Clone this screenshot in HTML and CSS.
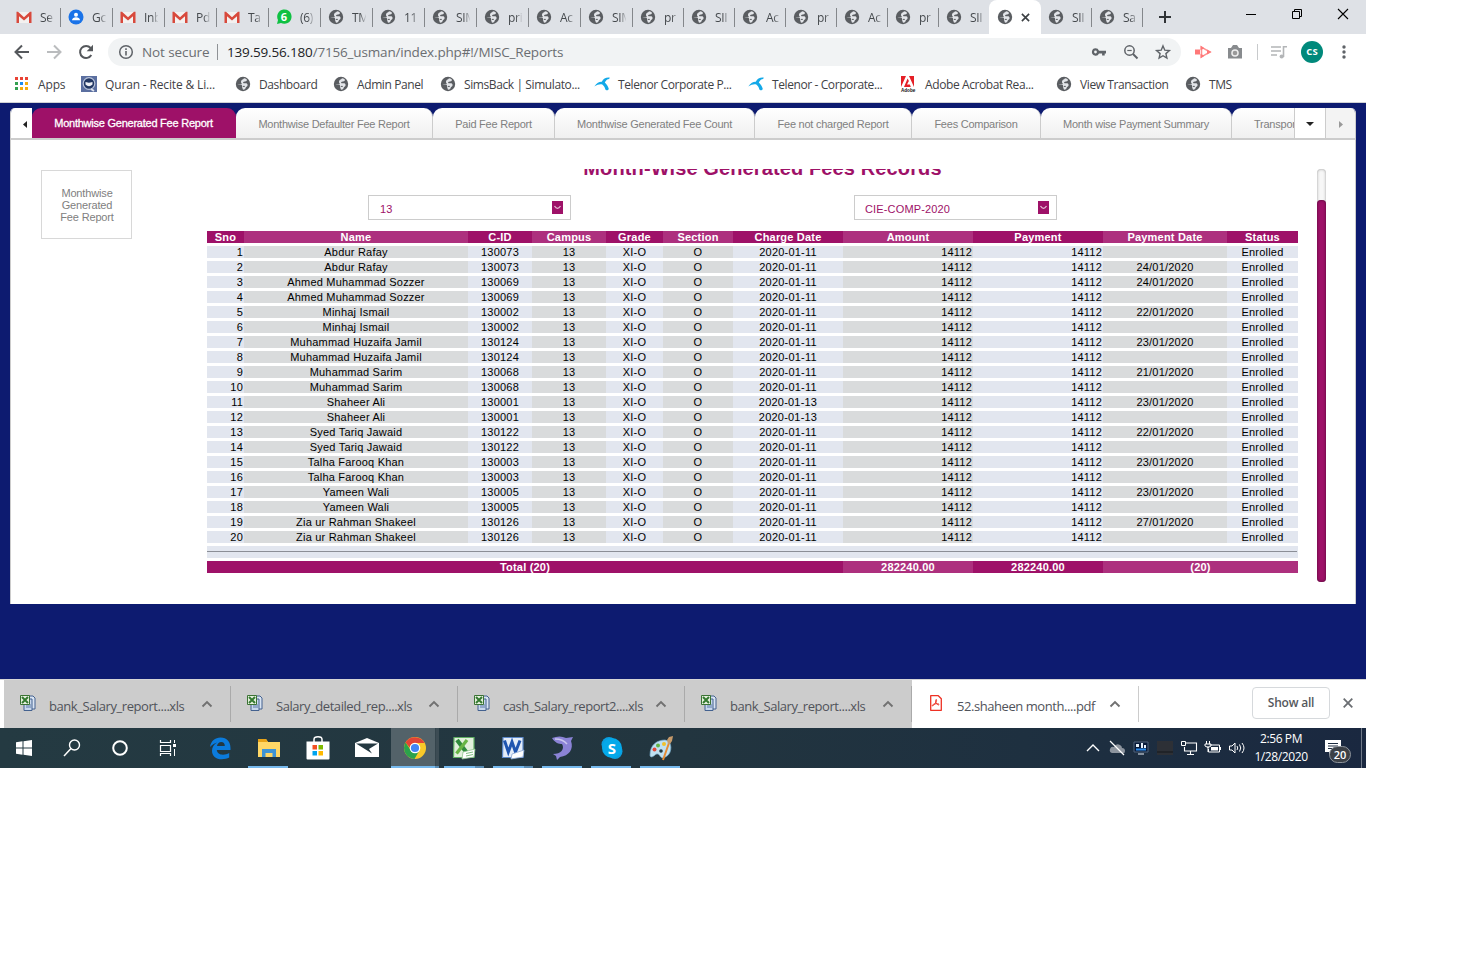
FILE: index.html
```html
<!DOCTYPE html>
<html lang="en">
<head>
<meta charset="utf-8">
<title>MISC Reports</title>
<link rel="stylesheet" href="styles.css">
</head>
<body>
<svg class="sprite" aria-hidden="true">
  <symbol id="globe" viewBox="0 0 16 16"><circle cx="8" cy="8" r="7.200" fill="#5a5d61"/><path d="M2.300 8.300l3.400.300c1.600.2 1.400 1.500 1.400 2.700l.9 2.500c2-.3 2.600-1.200 2.800-2.300.3-1 1.800-1 1.800-2.500 0-1.300-1-1.700-2.300-1.700H8.600c-.8-.4-.6-1.300.3-1.500 1.400-.2 3.300-.3 3-2C11.700 3 10.400 2.500 9 2.300c-.6 1.300-2 1.200-2.600 2.100-.7 1-.4 2.300.4 3.100z" fill="#e3e5e9"/><path d="M3.300 7.600h3.200M7.800 10.400h2" stroke="#5a5d61" stroke-width="1"/></symbol>
  <symbol id="gmail" viewBox="0 0 16 16"><path d="M1 3h14v11H1z" fill="#f3f1f0"/><path d="M.5 14V2.800h1.500L8 8.300l6-5.500h1.500V14H13V7.300l-5 4.200-5-4.200V14z" fill="#d8493c"/></symbol>
  <symbol id="xls" viewBox="0 0 16 16"><path d="M6 1h7l2 2v11H6z" fill="#d9e4f2" stroke="#43618f"/><path d="M4 4h8v11.500H4z" fill="#c7d7ec" stroke="#43618f"/><path d="M6 10h5M6 12h5" stroke="#5d7aa8"/><path d="M.5.5h9v9h-9z" fill="#e7f1df" stroke="#3b7334"/><path d="M2 2l6 6M8 2L2 8" stroke="#347a30" stroke-width="2"/></symbol>
  <symbol id="chev" viewBox="0 0 12 12"><path d="M1.500 8.500L6 4l4.500 4.500" fill="none" stroke="#717171" stroke-width="1.900"/></symbol>
  <symbol id="telenor" viewBox="0 0 16 16"><path d="M.3 10.500C3 6.500 5.500 5.500 7.800 5.700 9.500 2.200 12 1.200 15.700 1.500l-.5 1.500c-2 .2-3.400 1.500-4.400 3.500 2 1.700 3.400 4 4 6.500-.8 1.900-3 1.600-3.500.2-.5-2-1.600-3.600-3-4.700C6 8 3.500 8.500.3 10.500z" fill="#13a9e8"/></symbol>
</svg>
<div class="screen">
  <div class="tabstrip">
    <div class="tab"><svg><use href="#gmail"/></svg><span>Se</span></div>
    <div class="tab"><svg viewBox="0 0 16 16"><circle cx="8" cy="8" r="7.500" fill="#1a73e8"/><circle cx="8" cy="5.700" r="2" fill="#fff"/><path d="M4 11.300c0-4 8-4 8 0z" fill="#fff"/></svg><span>Gc</span></div>
    <div class="tab"><svg><use href="#gmail"/></svg><span>Inb</span></div>
    <div class="tab"><svg><use href="#gmail"/></svg><span>Pd</span></div>
    <div class="tab"><svg><use href="#gmail"/></svg><span>Ta</span></div>
    <div class="tab"><svg viewBox="0 0 16 16"><path d="M1 15l1-4a7.200 7.200 0 1 1 3 3z" fill="#0fc143"/><text x="8" y="12" class="wa">6</text></svg><span>(6)</span></div>
    <div class="tab"><svg><use href="#globe"/></svg><span>TM</span></div>
    <div class="tab"><svg><use href="#globe"/></svg><span>11</span></div>
    <div class="tab"><svg><use href="#globe"/></svg><span>SIM</span></div>
    <div class="tab"><svg><use href="#globe"/></svg><span>pri</span></div>
    <div class="tab"><svg><use href="#globe"/></svg><span>Ac</span></div>
    <div class="tab"><svg><use href="#globe"/></svg><span>SIM</span></div>
    <div class="tab narrow"><svg><use href="#globe"/></svg><span>pr</span></div>
    <div class="tab narrow"><svg><use href="#globe"/></svg><span>SII</span></div>
    <div class="tab narrow"><svg><use href="#globe"/></svg><span>Ac</span></div>
    <div class="tab narrow"><svg><use href="#globe"/></svg><span>pr</span></div>
    <div class="tab narrow"><svg><use href="#globe"/></svg><span>Ac</span></div>
    <div class="tab narrow"><svg><use href="#globe"/></svg><span>pr</span></div>
    <div class="tab narrow noline"><svg><use href="#globe"/></svg><span>SII</span></div>
    <div class="tab current"><svg><use href="#globe"/></svg><svg class="tabx" viewBox="0 0 10 10"><path d="M1 1l8 8M9 1L1 9" stroke="#3c4043" stroke-width="1.800"/></svg></div>
    <div class="tab narrow"><svg><use href="#globe"/></svg><span>SII</span></div>
    <div class="tab narrow"><svg><use href="#globe"/></svg><span>Sa</span></div>
    <svg class="plus" viewBox="0 0 12 12"><path d="M6 0v12M0 6h12" stroke="#303336" stroke-width="2"/></svg>
    <div class="winbtns">
      <svg viewBox="0 0 12 12"><path d="M1 6.500h10" stroke="#000"/></svg>
      <svg viewBox="0 0 12 12"><path d="M1.500 3.500h7v7h-7zM3.500 3.500v-2h7v7h-2" fill="none" stroke="#000"/></svg>
      <svg viewBox="0 0 12 12"><path d="M1 1l10 10M11 1L1 11" stroke="#000" stroke-width="1.100"/></svg>
    </div>
  </div>

  <div class="toolbar">
    <div class="nav">
      <svg viewBox="0 0 16 16"><path d="M15 8H2M8 1.500L1.500 8 8 14.500" fill="none" stroke="#55585c" stroke-width="2"/></svg>
      <svg viewBox="0 0 16 16"><path d="M1 8h13M8 1.500L14.500 8 8 14.500" fill="none" stroke="#babcbe" stroke-width="2"/></svg>
      <svg viewBox="0 0 16 16"><path d="M13.300 11A6 6 0 1 1 12.600 4" fill="none" stroke="#55585c" stroke-width="2"/><path d="M15 .8v6.400H8.700z" fill="#55585c"/></svg>
    </div>
    <div class="omnibox">
      <svg class="info" viewBox="0 0 16 16"><circle cx="8" cy="8" r="6.300" fill="none" stroke="#5f6368" stroke-width="1.500"/><path d="M8 7v4.500M8 4.300v1.600" stroke="#5f6368" stroke-width="1.600"/></svg>
      <span class="secure">Not secure</span><i></i>
      <span class="url"><b>139.59.56.180</b>/7156_usman/index.php#!/MISC_Reports</span>
      <div class="omni-icons">
        <svg viewBox="0 0 16 16"><path d="M4.500 4.300a3.700 3.700 0 0 1 3.500 2.400h7v2.800h-1.300v2h-2.600v-2H8a3.700 3.700 0 1 1-3.500-5.200z" fill="#5f6368"/><circle cx="4.500" cy="8" r="1.400" fill="#f1f3f4"/></svg>
        <svg viewBox="0 0 16 16"><circle cx="6.500" cy="6.500" r="4.700" fill="none" stroke="#5f6368" stroke-width="1.500"/><path d="M10 10l4.500 4.500" stroke="#5f6368" stroke-width="1.900"/><path d="M4.300 6.500h4.400" stroke="#5f6368" stroke-width="1.200"/></svg>
        <svg viewBox="0 0 16 16"><path d="M8 1.900l1.800 4.300 4.600.4-3.500 3 1 4.500L8 11.700l-3.900 2.400 1-4.500-3.500-3 4.600-.4z" fill="none" stroke="#5f6368" stroke-width="1.400"/></svg>
      </div>
    </div>
    <div class="exts">
      <svg viewBox="0 0 18 16"><path d="M1 5.500h5v5H1z" fill="#ff7878"/><path d="M7.500 3.200v9.600L16 8z" fill="#fff" stroke="#ff9090" stroke-width="1.500"/><path d="M6.500 1.500l4 2.700-4 2zM6.500 14.500l4-2.700-4-2zM13 5.500L17.500 8 13 10.500z" fill="#ff7878"/></svg>
      <svg viewBox="0 0 16 16"><path d="M1 4h3l2-3h4l2 3h3v10.500H1z" fill="#888b8e"/><circle cx="8" cy="9" r="3.800" fill="#eee"/><circle cx="8" cy="9" r="2.300" fill="#999"/></svg>
      <i></i>
      <svg viewBox="0 0 16 16"><path d="M0 3h10M0 7h10M0 11h6M12.500 13V2.800H16" fill="none" stroke="#b3b5b7" stroke-width="1.600"/><circle cx="10.700" cy="12.500" r="2.100" fill="#b3b5b7"/></svg>
      <div class="avatar">CS</div>
      <svg viewBox="0 0 16 16" fill="#5f6368"><circle cx="8" cy="3" r="1.700"/><circle cx="8" cy="8" r="1.700"/><circle cx="8" cy="13" r="1.700"/></svg>
    </div>
  </div>

  <div class="bookmarks">
    <div><svg viewBox="0 0 16 16"><path d="M1 1h3v3H1zM6 1h3v3H6zM11 1h3v3h-3z" fill="#e94335"/><path d="M1 6h3v3H1zM1 11h3v3H1z" fill="#34a050"/><path d="M6 6h3v3H6z" fill="#1a8cf0"/><path d="M11 6h3v3h-3zM11 11h3v3h-3zM6 11h3v3H6z" fill="#f5ac0c"/></svg><span>Apps</span></div>
    <div><svg viewBox="0 0 16 16"><path d="M0 0h16v16H0z" fill="#5b6fa0"/><circle cx="8" cy="7.500" r="5.800" fill="#223763" stroke="#b9c3d9" stroke-width="1.200"/><path d="M4.500 6l3.500.8 3.500-.8v2.500Q8 12 4.500 8.500z" fill="#eef0f5"/><path d="M10 13l3 2" stroke="#dfe4ef" stroke-width="1.800"/></svg><span>Quran - Recite &amp; Li...</span></div>
    <div><svg><use href="#globe"/></svg><span>Dashboard</span></div>
    <div><svg><use href="#globe"/></svg><span>Admin Panel</span></div>
    <div><svg><use href="#globe"/></svg><span>SimsBack | Simulato...</span></div>
    <div><svg><use href="#telenor"/></svg><span>Telenor Corporate P...</span></div>
    <div><svg><use href="#telenor"/></svg><span>Telenor - Corporate...</span></div>
    <div><svg viewBox="0 0 16 16"><path d="M0 0h13v11H0z" fill="#e51f26"/><path d="M0 11L5 0h3l5 11H9.800L8.900 8.600H6L7.900 5 6.600 2.500 3 11z" fill="#fff"/><text x="0" y="15.700" class="adobe">Adobe</text></svg><span>Adobe Acrobat Rea...</span></div>
    <div><svg><use href="#globe"/></svg><span>View Transaction</span></div>
    <div><svg><use href="#globe"/></svg><span>TMS</span></div>
  </div>

  <div class="page">
    <div class="panel">
      <div class="reports">
        <div class="prev"><svg viewBox="0 0 4 7"><path d="M4 0v7L0 3.500z" fill="#222"/></svg></div>
        <div class="rtab on">Monthwise Generated Fee Report</div>
        <div class="rtab">Monthwise Defaulter Fee Report</div>
        <div class="rtab">Paid Fee Report</div>
        <div class="rtab">Monthwise Generated Fee Count</div>
        <div class="rtab">Fee not charged Report</div>
        <div class="rtab">Fees Comparison</div>
        <div class="rtab">Month wise Payment Summary</div>
        <div class="rtab last">Transport</div>
        <div class="more"><svg viewBox="0 0 8 4"><path d="M0 0h8L4 4z" fill="#222"/></svg></div>
        <div class="next"><svg viewBox="0 0 4 7"><path d="M0 0v7l4-3.500z" fill="#999"/></svg></div>
      </div>
      <div class="body">
        <div class="side">Monthwise<br>Generated<br>Fee Report</div>
        <div class="report">
          <div class="heading"><span>Month-Wise Generated Fees Records</span></div>
          <div class="filters">
            <div class="select">13<svg viewBox="0 0 11 13"><path d="M2.500 5q1.500 2.300 3 2.300t3-2.300" fill="none" stroke="#e4bdd4" stroke-width="1.300"/></svg></div>
            <div class="select">CIE-COMP-2020<svg viewBox="0 0 11 13"><path d="M2.500 5q1.500 2.300 3 2.300t3-2.300" fill="none" stroke="#e4bdd4" stroke-width="1.300"/></svg></div>
          </div>
          <table>
            <colgroup><col class="w37"><col class="w224"><col class="w64"><col class="w74"><col class="w57"><col class="w70"><col class="w110"><col class="w130"><col class="w130"><col class="w124"><col class="w71"></colgroup>
            <thead><tr><th>Sno</th><th>Name</th><th>C-ID</th><th>Campus</th><th>Grade</th><th>Section</th><th>Charge Date</th><th>Amount</th><th>Payment</th><th>Payment Date</th><th>Status</th></tr></thead>
            <tbody>
            <tr><td>1</td><td>Abdur Rafay</td><td>130073</td><td>13</td><td>XI-O</td><td>O</td><td>2020-01-11</td><td>14112</td><td>14112</td><td></td><td>Enrolled</td></tr>
            <tr><td>2</td><td>Abdur Rafay</td><td>130073</td><td>13</td><td>XI-O</td><td>O</td><td>2020-01-11</td><td>14112</td><td>14112</td><td>24/01/2020</td><td>Enrolled</td></tr>
            <tr><td>3</td><td>Ahmed Muhammad Sozzer</td><td>130069</td><td>13</td><td>XI-O</td><td>O</td><td>2020-01-11</td><td>14112</td><td>14112</td><td>24/01/2020</td><td>Enrolled</td></tr>
            <tr><td>4</td><td>Ahmed Muhammad Sozzer</td><td>130069</td><td>13</td><td>XI-O</td><td>O</td><td>2020-01-11</td><td>14112</td><td>14112</td><td></td><td>Enrolled</td></tr>
            <tr><td>5</td><td>Minhaj Ismail</td><td>130002</td><td>13</td><td>XI-O</td><td>O</td><td>2020-01-11</td><td>14112</td><td>14112</td><td>22/01/2020</td><td>Enrolled</td></tr>
            <tr><td>6</td><td>Minhaj Ismail</td><td>130002</td><td>13</td><td>XI-O</td><td>O</td><td>2020-01-11</td><td>14112</td><td>14112</td><td></td><td>Enrolled</td></tr>
            <tr><td>7</td><td>Muhammad Huzaifa Jamil</td><td>130124</td><td>13</td><td>XI-O</td><td>O</td><td>2020-01-11</td><td>14112</td><td>14112</td><td>23/01/2020</td><td>Enrolled</td></tr>
            <tr><td>8</td><td>Muhammad Huzaifa Jamil</td><td>130124</td><td>13</td><td>XI-O</td><td>O</td><td>2020-01-11</td><td>14112</td><td>14112</td><td></td><td>Enrolled</td></tr>
            <tr><td>9</td><td>Muhammad Sarim</td><td>130068</td><td>13</td><td>XI-O</td><td>O</td><td>2020-01-11</td><td>14112</td><td>14112</td><td>21/01/2020</td><td>Enrolled</td></tr>
            <tr><td>10</td><td>Muhammad Sarim</td><td>130068</td><td>13</td><td>XI-O</td><td>O</td><td>2020-01-11</td><td>14112</td><td>14112</td><td></td><td>Enrolled</td></tr>
            <tr><td>11</td><td>Shaheer Ali</td><td>130001</td><td>13</td><td>XI-O</td><td>O</td><td>2020-01-13</td><td>14112</td><td>14112</td><td>23/01/2020</td><td>Enrolled</td></tr>
            <tr><td>12</td><td>Shaheer Ali</td><td>130001</td><td>13</td><td>XI-O</td><td>O</td><td>2020-01-13</td><td>14112</td><td>14112</td><td></td><td>Enrolled</td></tr>
            <tr><td>13</td><td>Syed Tariq Jawaid</td><td>130122</td><td>13</td><td>XI-O</td><td>O</td><td>2020-01-11</td><td>14112</td><td>14112</td><td>22/01/2020</td><td>Enrolled</td></tr>
            <tr><td>14</td><td>Syed Tariq Jawaid</td><td>130122</td><td>13</td><td>XI-O</td><td>O</td><td>2020-01-11</td><td>14112</td><td>14112</td><td></td><td>Enrolled</td></tr>
            <tr><td>15</td><td>Talha Farooq Khan</td><td>130003</td><td>13</td><td>XI-O</td><td>O</td><td>2020-01-11</td><td>14112</td><td>14112</td><td>23/01/2020</td><td>Enrolled</td></tr>
            <tr><td>16</td><td>Talha Farooq Khan</td><td>130003</td><td>13</td><td>XI-O</td><td>O</td><td>2020-01-11</td><td>14112</td><td>14112</td><td></td><td>Enrolled</td></tr>
            <tr><td>17</td><td>Yameen Wali</td><td>130005</td><td>13</td><td>XI-O</td><td>O</td><td>2020-01-11</td><td>14112</td><td>14112</td><td>23/01/2020</td><td>Enrolled</td></tr>
            <tr><td>18</td><td>Yameen Wali</td><td>130005</td><td>13</td><td>XI-O</td><td>O</td><td>2020-01-11</td><td>14112</td><td>14112</td><td></td><td>Enrolled</td></tr>
            <tr><td>19</td><td>Zia ur Rahman Shakeel</td><td>130126</td><td>13</td><td>XI-O</td><td>O</td><td>2020-01-11</td><td>14112</td><td>14112</td><td>27/01/2020</td><td>Enrolled</td></tr>
            <tr><td>20</td><td>Zia ur Rahman Shakeel</td><td>130126</td><td>13</td><td>XI-O</td><td>O</td><td>2020-01-11</td><td>14112</td><td>14112</td><td></td><td>Enrolled</td></tr>
            <tr class="rule"><td colspan="11"><hr></td></tr>
            </tbody>
            <tfoot><tr><th colspan="7">Total (20)</th><th>282240.00</th><th>282240.00</th><th colspan="2">(20)</th></tr></tfoot>
          </table>
        </div>
        <div class="scroll"><div></div></div>
      </div>
    </div>
  </div>

  <div class="downloads">
    <div class="dl"><svg><use href="#xls"/></svg><span>bank_Salary_report....xls</span><svg class="chev"><use href="#chev"/></svg></div>
    <div class="dl"><svg><use href="#xls"/></svg><span>Salary_detailed_rep....xls</span><svg class="chev"><use href="#chev"/></svg></div>
    <div class="dl"><svg><use href="#xls"/></svg><span>cash_Salary_report2....xls</span><svg class="chev"><use href="#chev"/></svg></div>
    <div class="dl"><svg><use href="#xls"/></svg><span>bank_Salary_report....xls</span><svg class="chev"><use href="#chev"/></svg></div>
    <div class="dl pdf"><svg viewBox="0 0 16 16"><path d="M2.700.7h7.600l3 3v11.600H2.700z" fill="#fff" stroke="#ee3124" stroke-width="1.300" stroke-linejoin="round"/><path d="M8 4.500c1.500 0 0 3.500-3 6.300-1.500.3-.8-1.300 1.500-1.800 2.500-.6 5-.3 4.500.8-1 .8-4.500-2.300-3-5.300z" fill="none" stroke="#ee3124"/></svg><span>52.shaheen month....pdf</span><svg class="chev"><use href="#chev"/></svg></div>
    <div class="showall">Show all</div>
    <svg class="dlx" viewBox="0 0 10 10"><path d="M.7.700l8.600 8.600M9.300.7L.7 9.300" stroke="#6b6e72" stroke-width="1.800"/></svg>
  </div>

  <div class="taskbar">
    <div class="sys"><svg viewBox="0 0 24 24"><path d="M4 6.300l6.500-1v6.200H4zM11.500 5.200L20 4v7.500h-8.500zM4 12.500h6.500v6.300L4 17.800zM11.500 12.500H20V20l-8.500-1.200z" fill="#fff"/></svg></div>
    <div class="sys"><svg viewBox="0 0 24 24"><circle cx="14.500" cy="9" r="5" fill="none" stroke="#fff" stroke-width="1.400"/><path d="M11 12.500L4 20" stroke="#fff" stroke-width="1.500"/></svg></div>
    <div class="sys"><svg viewBox="0 0 24 24"><circle cx="12" cy="12" r="6.800" fill="none" stroke="#fff" stroke-width="2"/></svg></div>
    <div class="sys"><svg viewBox="0 0 24 24"><path d="M4.500 4v2.500h10V4M4.500 9.500h10v6h-10zM4.500 20v-2.500h10V20" fill="none" stroke="#fff" stroke-width="1.200"/><path d="M18.500 4v3M18.500 13v7" stroke="#fff"/><path d="M17 8h3v3h-3z" fill="#fff"/></svg></div>
    <div class="app edge"><svg viewBox="0 0 24 24"><path d="M2 11C3 5 7 1.500 12.500 1.500 19 1.500 22.500 6 22.500 12v2H8.800c.2 3 3 4.700 6.200 4.700 2.300 0 4.300-.5 6.200-1.700v4.600c-2 1.200-4.500 1.700-7.300 1.700C7.800 23.300 4 20 4 14.700c0-3.600 1.900-6.500 5.200-8.200C6.300 7.300 4 8.700 2 11zm7-1h7.800c0-2.600-1.300-4.100-3.600-4.100S9.300 7.600 9 10z" fill="#0b7bdc"/></svg></div>
    <div class="app open"><svg viewBox="0 0 24 24"><path d="M1 3h8l2 3h12v15H1z" fill="#ffd766"/><path d="M1 3h8l2 3H1z" fill="#e8a317"/><path d="M5 13h14v8h-3.500v-4h-7v4H5z" fill="#3e94d5"/></svg></div>
    <div class="app"><svg viewBox="0 0 24 24"><path d="M.5 5.500h23V22.500q0 1-1 1h-21q-1 0-1-1z" fill="#fff"/><path d="M8 6V3.500Q8 .8 12 .8t4 2.700V6" fill="none" stroke="#fff" stroke-width="1.500"/><path d="M6.500 9H11v4.500H6.500z" fill="#f25022"/><path d="M12.500 9H17v4.500h-4.500z" fill="#7fba00"/><path d="M6.500 15H11v4.500H6.500z" fill="#00a4ef"/><path d="M12.500 15H17v4.500h-4.500z" fill="#ffb900"/></svg></div>
    <div class="app"><svg viewBox="0 0 24 24"><path d="M0 7l12-5 12 5v14H0z" fill="#fff"/><path d="M1 7.500h22l-9 5.500 3 4.500z" fill="#243841"/></svg></div>
    <div class="app open active"><svg viewBox="0 0 24 24"><circle cx="12" cy="12" r="11" fill="#f9c929"/><path d="M2.500 6.500A11 11 0 0 1 21.600 7H12a5 5 0 0 0-5 5z" fill="#e14437"/><path d="M2.500 6.500A11 11 0 0 0 11.500 23l4.600-8a5 5 0 0 1-8.600-1.300z" fill="#2ba24c"/><circle cx="12" cy="12" r="5.300" fill="#fff"/><circle cx="12" cy="12" r="4.100" fill="#4285f4"/></svg></div>
    <div class="app open multi"><svg viewBox="0 0 24 24"><path d="M2 1.500h20v20H1.500z" fill="#e1f0dc" stroke="#5fae63" stroke-width="1.200"/><path d="M5 4l10 13" stroke="#2f8b3c" stroke-width="4.200"/><path d="M15 4L4.500 17.500" stroke="#67b545" stroke-width="3.300"/><path d="M11 16l12-3-1 8-12 2z" fill="#fff" stroke="#8fc48f" stroke-width=".8"/><path d="M14 17.500l7-1.500M14 20l7-1.500" stroke="#7fbe7f"/></svg></div>
    <div class="app open multi"><svg viewBox="0 0 24 24"><path d="M2 1.500h20v20H1.500z" fill="#e4edf9" stroke="#5d89c9" stroke-width="1.200"/><path d="M3.500 4.500l3.800 11.500L11 6l3.500 10L19 4.500" fill="none" stroke="#1f55b0" stroke-width="3"/><path d="M11 18l12-4-1 7-12 2z" fill="#fff" stroke="#8ba8d4" stroke-width=".8"/></svg></div>
    <div class="app open"><svg viewBox="0 0 24 24"><path d="M1 2q8-3 14 0l7-1-2 4c3 8-2 15-11 16l-3 3-1-4-3-2c8 0 12-5 9-10-3 0-7-1-10-6z" fill="#8b83d6"/><path d="M4 3q8 0 12 5" fill="none" stroke="#c9c6ef" stroke-width="1.500"/></svg></div>
    <div class="app open"><svg viewBox="0 0 24 24"><circle cx="9" cy="8.500" r="7.500" fill="#0a9fe0"/><circle cx="15" cy="15.500" r="7.500" fill="#0a9fe0"/><circle cx="12" cy="12" r="10" fill="#05a9ea"/><text x="12" y="17.500" class="skype">S</text></svg></div>
    <div class="app open"><svg viewBox="0 0 24 24"><path d="M1 19C1 9 8 4 16 4c8 1 7 13 2 16-4 3-6 2-7 0s-3-3-5-1-5 3-5 0z" fill="#bfe0f2" stroke="#75a9c9" stroke-width=".7"/><circle cx="5.500" cy="13.500" r="2" fill="#e2493b"/><circle cx="9" cy="9.500" r="2" fill="#64b445"/><circle cx="15" cy="8" r="2" fill="#f0c02c"/><circle cx="12" cy="15" r="1.800" fill="#243841"/><path d="M14 24l6-17" stroke="#e58b35" stroke-width="2"/><path d="M19 8l-1-4 2-3 4-1-1 5-2 3z" fill="#c79b6b"/></svg></div>
    <div class="tray">
      <svg viewBox="0 0 16 16"><path d="M2 11l6-6 6 6" fill="none" stroke="#fff" stroke-width="1.400"/></svg>
      <svg viewBox="0 0 16 16"><path d="M3 13q-3-1-2-4t4-2q2-4 6-2 2 1 2 3 3 0 3 3t-3 2z" fill="#8d949e"/><path d="M1 1l14 14" stroke="#fff" stroke-width="1.300"/></svg>
      <svg viewBox="0 0 16 16"><path d="M1 2h14v10H1z" fill="#081a38" stroke="#53657c"/><path d="M3 4h3v3H3zM8 3h2v5H8zM11 5h2v3h-2z" fill="#e8f1fa"/><path d="M3 9.500h10" stroke="#2b8bea" stroke-width="2"/><path d="M5 14h6" stroke="#a6b0bd" stroke-width="1.500"/></svg>
      <svg viewBox="0 0 16 16"><path d="M0 1h16v14H0z" fill="#2d3036"/><path d="M0 12h16" stroke="#15171b"/></svg>
      <svg viewBox="0 0 16 16"><path d="M5 3h10.500v8H3.500V7M9.500 11v3.500M6 14.500h7" fill="none" stroke="#fff" stroke-width="1.100"/><path d="M.5 1.500h4v4h-4z" fill="none" stroke="#fff"/></svg>
      <svg viewBox="0 0 16 16"><path d="M4.500 5h10v7h-11V9" fill="none" stroke="#fff"/><path d="M6 7h7v3.500H6zM14.500 7H16v3h-1.500z" fill="#fff"/><path d="M1.500 1v3M4.500 1v3M0 4h6v2q-3 3-6 0zM3 6v6" fill="none" stroke="#fff"/></svg>
      <svg viewBox="0 0 16 16"><path d="M.5 6h2.500l3-3v10l-3-3H.5z" fill="none" stroke="#fff"/><path d="M8 6q1.500 2 0 4M10.500 4.500q2.500 3.500 0 7M13 3q4 5 0 10" fill="none" stroke="#fff"/></svg>
    </div>
    <div class="clock">2:56 PM<br>1/28/2020</div>
    <div class="notes"><svg viewBox="0 0 18 16"><path d="M0 0h16v12H8l-4 3v-3H0z" fill="#fff"/><path d="M3 3.500h10M3 6h10M3 8.500h10" stroke="#1c2b40"/></svg><span>20</span></div>
  </div>
</div>
</body>
</html>
```

FILE: styles.css
```css
* { box-sizing: border-box; }
body { margin: 0; background: #fff; font-family: "Open Sans", "Noto Sans", sans-serif; }
svg { display: block; flex: none; overflow: visible; }
.sprite { display: none; }
.screen { width: 1366px; height: 768px; display: flex; flex-direction: column; overflow: hidden; white-space: nowrap; }

.tabstrip { height: 34px; background: #dee1e6; display: flex; align-items: center; padding-left: 9px; flex: none; }
.tab { width: 52px; height: 34px; display: flex; align-items: center; padding-left: 7px; gap: 8px; position: relative; flex: none; }
.tab svg { width: 16px; height: 16px; }
.tab span { width: 14px; overflow: hidden; font-size: 12px; letter-spacing: -.3px; color: #45494d; -webkit-mask-image: linear-gradient(90deg, #000 55%, rgba(0, 0, 0, .1)); mask-image: linear-gradient(90deg, #000 55%, rgba(0, 0, 0, .1)); }
.tab::after { content: ""; position: absolute; right: 0; top: 8px; width: 1px; height: 19px; background: #84878b; }
.tab.narrow { width: 51px; }
.tab.noline::after, .tab.current::after { display: none; }
.tab.current { background: #fff; border-radius: 8px 8px 0 0; padding-left: 8px; margin-left: -1px; }
.tab.current .tabx { width: 9px; height: 9px; }
.wa { font: bold 11px "Open Sans", sans-serif; fill: #fff; text-anchor: middle; }
.plus { width: 12px; height: 12px; margin-left: 16px; }
.winbtns { display: flex; gap: 34px; margin: -6px 0 0 auto; padding-right: 17px; }
.winbtns svg { width: 12px; height: 12px; }

.toolbar { height: 35px; display: flex; align-items: center; flex: none; padding-left: 14px; }
.nav { display: flex; gap: 16px; width: 94px; }
.nav svg { width: 16px; height: 16px; }
.omnibox { width: 1073px; height: 28px; border-radius: 14px; background: #f1f3f4; display: flex; align-items: center; padding: 0 10px; font-size: 13.500px; color: #6b6e72; }
.info { width: 16px; height: 16px; margin-right: 8px; }
.secure { width: 67px; letter-spacing: -.1px; }
.omnibox i { width: 1px; height: 16px; background: #8f9296; margin: 0 9px 0 8px; }
.url b { font-weight: 400; color: #202124; }
.url { letter-spacing: -.17px; }
.omni-icons { display: flex; gap: 16px; margin-left: auto; }
.omni-icons svg { width: 16px; height: 16px; }
.exts { display: flex; align-items: center; margin-left: 13px; }
.exts svg { width: 16px; height: 16px; margin-right: 16px; }
.exts svg:first-child { width: 18px; margin-right: 15px; }
.exts i { width: 1px; height: 16px; background: #c8cacc; margin: 0 13px 0 -2px; }
.exts i + svg { margin-right: 14px; }
.avatar { width: 22px; height: 22px; border-radius: 50%; background: #00897b; color: #fff; font-size: 9.500px; font-weight: 700; line-height: 22px; text-align: center; margin-right: 13px; }
.exts svg:last-child { margin-right: 0; }

.bookmarks { height: 34px; display: grid; grid-template-columns: 67px 155px 98px 107px 154px 154px 153px 155px 129px 60px; padding: 0 0 3px 14px; align-items: center; border-bottom: 1px solid #d0d2d5; flex: none; }
.bookmarks div { display: flex; align-items: center; gap: 8px; font-size: 12px; letter-spacing: -.4px; color: #3f4246; }
.bookmarks div:first-child, .bookmarks div:nth-child(2) { letter-spacing: -.15px; }
.bookmarks div:nth-child(n+3) { margin-left: -1px; }
.bookmarks svg { width: 16px; height: 16px; }
.adobe { font: bold 4.600px "Liberation Sans", sans-serif; letter-spacing: 0; fill: #111; }

.page { height: 576px; background: #0d1b70; padding: 5px 10px 0; flex: none; font-family: "Liberation Sans", Arial, sans-serif; }
.panel { height: 496px; background: #fff; border-left: 1px solid #ccc; border-right: 1px solid #ccc; border-radius: 5px 5px 0 0; overflow: hidden; }
.reports { height: 32px; border-bottom: 2px solid #ccc; display: flex; background: #0d1b70; }
.prev { width: 21px; background: #fff; display: flex; align-items: center; justify-content: flex-end; padding: 2px 5px 0 0; }
.prev svg, .next svg { width: 4px; height: 7px; }
.rtab { font-size: 11px; letter-spacing: -.24px; line-height: 32px; color: #808080; text-align: center; background: linear-gradient(#fff, #f0f0f0); border-radius: 9px 9px 0 0; border-right: 1px solid #ccc; overflow: hidden; flex: none; }
.rtab:nth-child(2) { width: 204px; }
.rtab:nth-child(3) { width: 197px; }
.rtab:nth-child(4) { width: 122px; }
.rtab:nth-child(5) { width: 200px; }
.rtab:nth-child(6) { width: 157px; }
.rtab:nth-child(7) { width: 129px; }
.rtab:nth-child(8) { width: 191px; }
.rtab.on { background: #9e1168; color: #fff; line-height: 30px; border-right-color: #9e1168; -webkit-text-stroke: .3px #fff; }
.rtab.last { width: 63px; border-radius: 9px 0 0 0; text-align: left; padding-left: 22px; }
.more { width: 31px; background: #fff; display: flex; align-items: center; justify-content: center; border-right: 1px solid #ccc; padding-top: 2px; }
.more svg { width: 8px; height: 4px; }
.next { flex: 1; background: #f3f3f3; display: flex; align-items: center; justify-content: center; padding-top: 2px; }
.body { display: flex; padding: 29px 29px 0 30px; align-items: flex-start; }
.side { width: 91px; height: 69px; margin-top: 1px; border: 1px solid #d8d8d8; text-align: center; font-size: 11px; letter-spacing: -.15px; line-height: 12px; color: #808080; padding: 16px 0 0 1px; flex: none; }
.report { width: 1091px; margin-left: 75px; flex: none; }
.heading { height: 26px; overflow: hidden; text-align: center; font-size: 20px; font-weight: 700; color: #9e1168; line-height: 22px; }
.heading span { display: block; margin: -12px 0 0 20px; letter-spacing: .12px; width: 1071px; }
.filters { display: flex; padding: 0 241px 0 161px; justify-content: space-between; height: 33px; }
.select { width: 203px; height: 25px; border: 1px solid #ccc; display: flex; justify-content: space-between; padding: 2px 7px 0 10px; font-size: 11px; line-height: 23px; color: #9e1168; letter-spacing: .15px; }
.select:first-child { padding-left: 11px; letter-spacing: .2px; }
.select svg { width: 11px; height: 13px; background: #9e1168; margin-top: 3px; }
table { width: 1091px; table-layout: fixed; border-spacing: 0 3px; font-size: 11px; letter-spacing: .2px; line-height: 12px; color: #000; }
td, th { padding: 0; height: 12px; text-align: center; }
th { color: #fff; background: #9e1168; }
thead th:nth-child(even) { background: #ad307e; }
tfoot th:nth-child(even) { background: #ad307e; }
td:nth-child(odd) { background: #e2e6ef; }
td:nth-child(even) { background: #d9dbdc; }
tbody td:nth-child(1), td:nth-child(8), td:nth-child(9) { text-align: right; padding-right: 1px; }
.rule hr { margin: -1px 1px 0 0; border: 0; height: 1px; background: #8b8e96; }
tbody .rule td { padding: 0; }
.w37 { width: 37px; } .w224 { width: 224px; } .w64 { width: 64px; } .w74 { width: 74px; } .w57 { width: 57px; } .w70 { width: 70px; } .w110 { width: 110px; } .w130 { width: 130px; } .w124 { width: 124px; } .w71 { width: 71px; }
.scroll { width: 9px; height: 413px; margin-left: 19px; background: #f7f7f7; border-radius: 4px; box-shadow: inset 0 0 3px #999; padding-top: 31px; flex: none; }
.scroll div { height: 382px; border-radius: 4px; background: #9e1168; box-shadow: inset 0 0 3px #4c0832; }

.downloads { height: 49px; border-top: 1px solid #d6d6d6; display: flex; align-items: center; padding-left: 4px; flex: none; background: #fff; }
.dl { width: 227px; height: 48px; background: #ccc; display: flex; align-items: center; padding-left: 16px; position: relative; font-size: 13px; letter-spacing: -.44px; color: #50535a; flex: none; }
.dl::after { content: ""; position: absolute; right: 0; top: 6px; width: 1px; height: 36px; background: #aaa; }
.dl svg { width: 16px; height: 16px; margin-right: 13px; margin-top: -2px; }
.dl span { width: 151px; padding-top: 4px; }
.dl svg.chev { width: 12px; height: 12px; margin: 0 0 0 1px; }
.pdf { background: #fff; }
.pdf::after { background: #ccc; }
.showall { width: 78px; height: 32px; border: 1px solid #d6d9dc; border-radius: 4px; margin-left: 113px; margin-top: -2px; font-size: 12px; font-weight: 600; letter-spacing: -.2px; color: #55585c; line-height: 30px; text-align: center; }
.dlx { width: 10px; height: 10px; margin: -2px 0 0 13px; }

.taskbar { height: 40px; display: flex; background: linear-gradient(90deg, #243a42, #22353f 50%, #1e3040 75%, #1a2840); flex: none; color: #fff; }
.sys { width: 48px; display: flex; align-items: center; justify-content: center; }
.sys svg { width: 24px; height: 24px; }
.app { width: 49px; display: flex; align-items: center; justify-content: center; position: relative; flex: none; }
.app svg { width: 24px; height: 24px; }
.edge { margin-left: 3px; }
.open::after { content: ""; position: absolute; left: 4px; bottom: 0; width: 40px; height: 2px; background: #76b9ed; }
.open.active { background: linear-gradient(90deg, #536269 44px, #2c3d45 44px, #3c4c54 45px); width: 48px; margin-right: 1px; }
.open.active::after { left: 0; width: 48px; background: linear-gradient(90deg, #76b9ed 44px, #5a8db5 44px); }
.open.multi::after { background: linear-gradient(90deg, #76b9ed 31px, #5a8db5 31px); }
.multi svg { margin-left: -2px; }
.skype { font: bold 15px "Open Sans", sans-serif; fill: #fff; text-anchor: middle; }
.tray { display: flex; align-items: center; gap: 8px; margin-left: auto; }
.tray svg { width: 16px; height: 16px; }
.clock { width: 68px; margin-left: 2px; text-align: center; font-size: 12px; letter-spacing: -.4px; line-height: 18px; padding-top: 2px; }
.notes { width: 47px; border-right: 1px solid #6f7988; margin-right: 4px; position: relative; padding: 12px 0 0 10px; }
.notes svg { width: 18px; height: 16px; }
.notes span { position: absolute; left: 14px; top: 18px; width: 22px; height: 17px; border-radius: 9px; background: #3b4047; border: 1px solid #8e949c; text-align: center; font-size: 11px; line-height: 15px; font-weight: 600; }
```
